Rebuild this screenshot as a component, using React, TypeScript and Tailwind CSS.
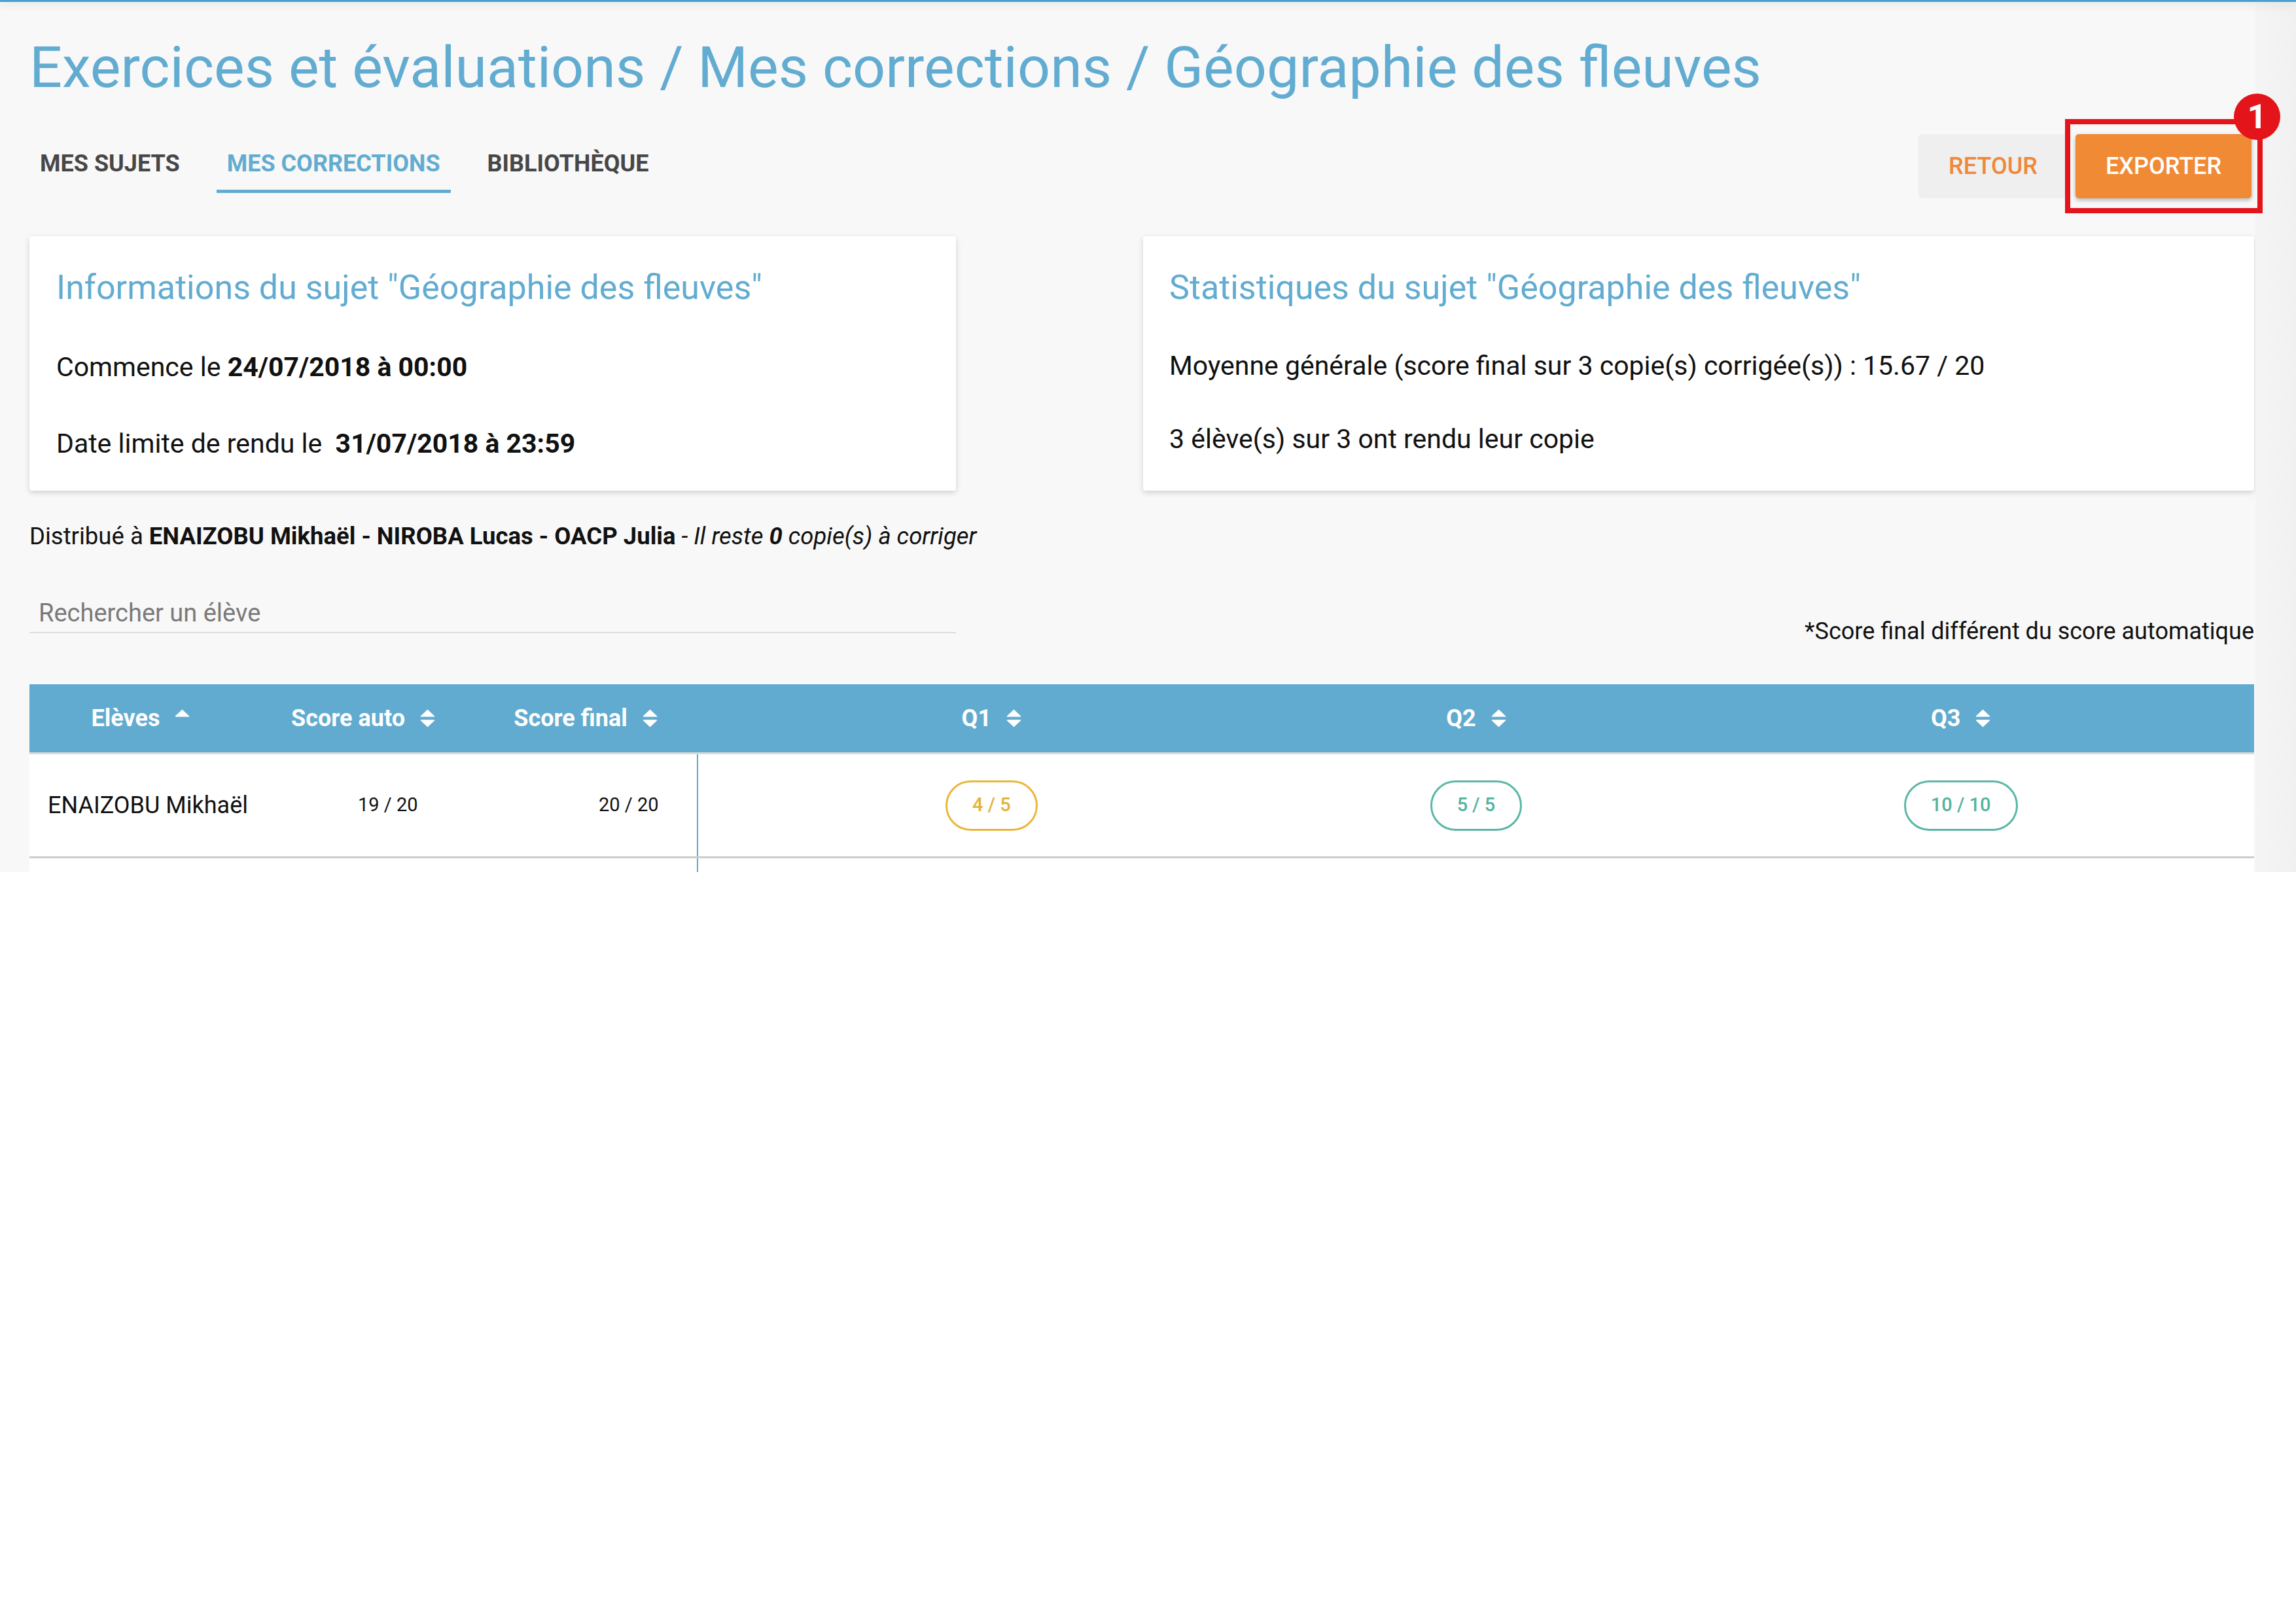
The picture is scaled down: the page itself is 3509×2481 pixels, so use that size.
import React from "react";

type Tone = "warn" | "ok";

interface Answer {
  value: string;
  tone: Tone;
}

interface StudentRow {
  name: string;
  auto: string;
  final: string;
  answers: Answer[];
}

const rows: StudentRow[] = [
  {
    name: "ENAIZOBU Mikhaël",
    auto: "19 / 20",
    final: "20 / 20",
    answers: [
      { value: "4 / 5", tone: "warn" },
      { value: "5 / 5", tone: "ok" },
      { value: "10 / 10", tone: "ok" },
    ],
  },
];

const toneClass: Record<Tone, string> = {
  warn: "border-[#e9b73c] text-[#e3b23a]",
  ok: "border-[#5bb7a5] text-[#55b3a1]",
};

function SortIcon({ both = true }: { both?: boolean }) {
  return (
    <svg width="23" height="28" viewBox="0 0 23 28" className="shrink-0">
      <path d="M11.5 1.5 L21.5 11 L1.5 11 Z" fill="white" stroke="white" strokeWidth="1.5" strokeLinejoin="round" />
      {both && (
        <path d="M1.5 17 L21.5 17 L11.5 26.5 Z" fill="white" stroke="white" strokeWidth="1.5" strokeLinejoin="round" />
      )}
    </svg>
  );
}

function HeaderCell({ label, both = true }: { label: string; both?: boolean }) {
  return (
    <div className="flex items-center justify-center gap-[23px]">
      <span>{label}</span>
      <SortIcon both={both} />
    </div>
  );
}

function ScoreBadge({ answer }: { answer: Answer }) {
  return (
    <span
      className={
        "inline-flex h-[77px] items-center rounded-full border-[3px] bg-white px-[38px] text-[29px] font-medium " +
        toneClass[answer.tone]
      }
    >
      {answer.value}
    </span>
  );
}

export default function App() {
  const tabs = ["MES SUJETS", "MES CORRECTIONS", "BIBLIOTHÈQUE"];
  const activeTab = 1;

  return (
    <div className="bg-white font-[Roboto,sans-serif]">
      <div className="flex h-[1333px] flex-col overflow-hidden bg-[#f8f8f8]">
        {/* header bottom edge */}
        <div className="relative z-10 h-[3px] shrink-0 bg-[#4b9fcf] shadow-[0_4px_14px_rgba(0,0,0,0.18)]" />

        <div className="flex flex-1">
          <main className="flex-1 pl-[45px] pr-[2px] pt-[48px]">
            {/* Title */}
            <h1 className="whitespace-nowrap text-[88px] font-normal leading-[103px] text-[#62acd1]">
              Exercices et évaluations / Mes corrections / Géographie des fleuves
            </h1>

            {/* Tabs + actions */}
            <div className="mt-[49px] flex items-start justify-between">
              <nav className="flex gap-[40px]">
                {tabs.map((tab, i) => (
                  <div
                    key={tab}
                    className={
                      i === activeTab
                        ? "border-b-[5px] border-[#62acd1] px-[16px] pb-[19px] pt-[26px] text-[36px] font-bold leading-[42px] text-[#62acd1]"
                        : "border-b-[5px] border-transparent px-[16px] pb-[19px] pt-[26px] text-[36px] font-bold leading-[42px] text-[#474747]"
                    }
                  >
                    {tab}
                  </div>
                ))}
              </nav>

              <div className="mr-[4px] mt-[2px] flex gap-[12px]">
                <button className="flex h-[98px] w-[228px] items-center justify-center rounded-[5px] bg-[#efefef] text-[36px] font-medium text-[#f0883a]">
                  RETOUR
                </button>
                <div className="relative">
                  <button className="flex h-[98px] w-[269px] items-center justify-center rounded-[5px] bg-[#f08a35] text-[36px] font-medium text-white shadow-[0_3px_6px_rgba(0,0,0,0.28)]">
                    EXPORTER
                  </button>
                  {/* annotation */}
                  <div className="pointer-events-none absolute -bottom-[23px] -left-[16px] -right-[17px] -top-[23px] border-[8px] border-[#e3151b]" />
                  <div className="absolute left-[242px] top-[-62px] flex h-[71px] w-[71px] items-center justify-center rounded-full bg-[#e3151b] text-[52px] font-bold leading-none text-white">
                    1
                  </div>
                </div>
              </div>
            </div>

            {/* Cards */}
            <div className="mt-[58px] flex justify-between">
              <section className="h-[389px] w-[1416px] rounded-[4px] bg-white px-[41px] pt-[48px] shadow-[0_3px_8px_rgba(0,0,0,0.16)]">
                <h2 className="text-[52px] font-normal leading-[61px] text-[#62acd1]">
                  Informations du sujet "Géographie des fleuves"
                </h2>
                <p className="mt-[67px] text-[41px] leading-[48px] text-[#111]">
                  Commence le <b className="font-bold">24/07/2018 à 00:00</b>
                </p>
                <p className="mt-[69px] text-[41px] leading-[48px] text-[#111]">
                  Date limite de rendu le&nbsp; <b className="font-bold">31/07/2018 à 23:59</b>
                </p>
              </section>

              <section className="h-[389px] w-[1698px] rounded-[4px] bg-white px-[40px] pt-[48px] shadow-[0_3px_8px_rgba(0,0,0,0.16)]">
                <h2 className="text-[52px] font-normal leading-[61px] text-[#62acd1]">
                  Statistiques du sujet "Géographie des fleuves"
                </h2>
                <p className="mt-[65px] text-[41px] leading-[48px] text-[#111]">
                  Moyenne générale (score final sur 3 copie(s) corrigée(s)) : 15.67 / 20
                </p>
                <p className="mt-[64px] text-[41px] leading-[48px] text-[#111]">
                  3 élève(s) sur 3 ont rendu leur copie
                </p>
              </section>
            </div>

            {/* Distribution */}
            <p className="mt-[49px] text-[36.5px] leading-[42px] text-[#111]">
              Distribué à <b className="font-bold">ENAIZOBU Mikhaël - NIROBA Lucas - OACP Julia</b>
              <i> - Il reste <b className="font-bold">0</b> copie(s) à corriger</i>
            </p>

            {/* Search + note */}
            <div className="mt-[74px] flex items-start justify-between">
              <div className="w-[1416px] border-b-2 border-[#dddddd] pb-[6px] pl-[14px]">
                <input
                  placeholder="Rechercher un élève"
                  className="h-[45px] w-full bg-transparent text-[38px] leading-[45px] text-[#333] outline-none placeholder:text-[#7a7a7a]"
                />
              </div>
              <p className="mt-[29px] text-[36px] leading-[42px] text-[#111]">
                *Score final différent du score automatique
              </p>
            </div>

            {/* Table */}
            <div className="mt-[60px]">
              <div className="flex h-[107px] border-b-[3px] border-[#d9d9d9] bg-[#62abd0] text-[36px] font-bold leading-[42px] text-white">
                <div className="flex w-[340px] items-center justify-center">
                  <HeaderCell label="Elèves" both={false} />
                </div>
                <div className="flex w-[340px] items-center justify-center">
                  <HeaderCell label="Score auto" />
                </div>
                <div className="flex w-[340px] items-center justify-center">
                  <HeaderCell label="Score final" />
                </div>
                <div className="flex flex-1 pl-[80px] pr-[78px]">
                  {["Q1", "Q2", "Q3"].map((q) => (
                    <div key={q} className="flex flex-1 items-center justify-center">
                      <HeaderCell label={q} />
                    </div>
                  ))}
                </div>
              </div>

              {rows.map((row) => (
                <div key={row.name} className="flex h-[159px] border-b-[3px] border-[#cccccc] bg-white text-[#111]">
                  <div className="flex w-[340px] items-center pl-[28px] text-[36px]">{row.name}</div>
                  <div className="flex w-[340px] items-center pl-[162px] text-[29px]">{row.auto}</div>
                  <div className="flex w-[340px] items-center pl-[190px] text-[29px]">{row.final}</div>
                  <div className="flex flex-1 border-l-2 border-[#62abd0] pl-[78px] pr-[78px]">
                    {row.answers.map((a, i) => (
                      <div key={i} className="flex flex-1 items-center justify-center">
                        <ScoreBadge answer={a} />
                      </div>
                    ))}
                  </div>
                </div>
              ))}

              {/* next row, cut by the edge of the capture */}
              <div className="flex h-[40px] bg-white">
                <div className="w-[1020px]" />
                <div className="flex-1 border-l-2 border-[#62abd0]" />
              </div>
            </div>
          </main>

          {/* scroll gutter */}
          <div className="w-[62px] shrink-0 bg-gradient-to-r from-[#f5f5f5] to-[#f0f0f0]" />
        </div>
      </div>
    </div>
  );
}
